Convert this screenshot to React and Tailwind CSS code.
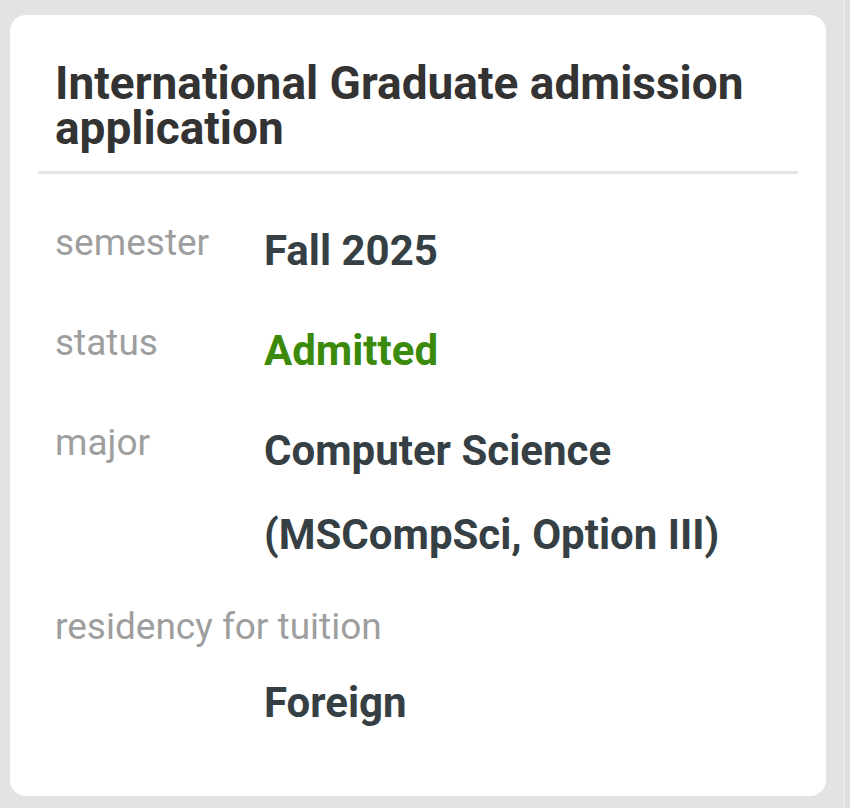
import React from 'react';

const rows = [
  { label: 'semester', value: ['Fall 2025'] },
  { label: 'status', value: ['Admitted'], green: true },
  { label: 'major', value: ['Computer Science', '(MSCompSci, Option III)'] },
];

export default function App() {
  return (
    <div className="flex h-[808px] w-[850px] bg-[#e3e3e3]" style={{ fontFamily: 'Roboto, "Noto Sans", sans-serif' }}>
      <div className="flex-1 pt-[15px] pl-[10px] pr-[17px]">
        <div className="rounded-[16px] bg-white px-[28px] pb-[51px]">
          {/* header */}
          <h1 className="px-[17px] pt-[46px] pb-[20px] text-[46px] font-bold leading-[45px] text-[#333333]">
            International Graduate admission application
          </h1>
          <div className="h-[3px] bg-[#e6e6e6]" />

          {/* details */}
          <div className="flex flex-col gap-4 px-[17px] pt-[35px]">
            {rows.map((row) => (
              <div key={row.label} className="flex items-start">
                <div className="w-[209px] shrink-0 text-[37px] leading-[68px] text-[#9e9e9e]">{row.label}</div>
                <div className={`text-[42px] font-bold leading-[84px] ${row.green ? 'text-[#3b8a0c]' : 'text-[#353f44]'}`}>
                  {row.value.map((v) => (
                    <div key={v}>{v}</div>
                  ))}
                </div>
              </div>
            ))}
            <div>
              <div className="text-[37px] leading-[68px] text-[#9e9e9e]">residency for tuition</div>
              <div className="pl-[209px] text-[42px] font-bold leading-[84px] text-[#353f44]">Foreign</div>
            </div>
          </div>
        </div>
      </div>
      <div className="w-[7px] border-l-[2px] border-[#ebebeb] bg-[#e0e0e0]" />
    </div>
  );
}
